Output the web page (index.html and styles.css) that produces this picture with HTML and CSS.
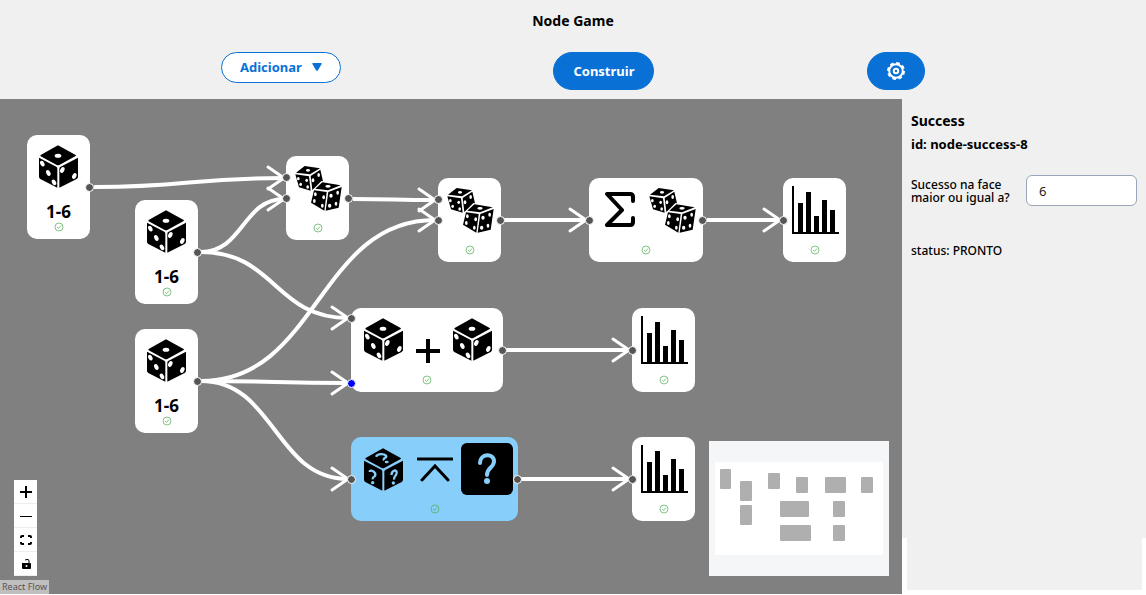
FILE: index.html
```html
<!DOCTYPE html>
<html lang="pt-BR">
<head>
<meta charset="utf-8">
<title>Node Game</title>
<link rel="stylesheet" href="styles.css">
</head>
<body>
<svg class="sprite" aria-hidden="true">
  <symbol id="die" viewBox="0 0 117 127">
    <path d="M57 0 110 29Q112 31 110 32L61 59Q57 61 53 59L5 33Q3 31 5 29Z"/>
    <path d="M0 37 52 64Q55 66 55 70V127L4 101Q0 98 0 94Z"/>
    <path d="M117 37 65 64Q61 66 61 70V127L113 101Q117 98 117 94Z"/>
    <g fill="#fff">
      <ellipse cx="57" cy="31" rx="10" ry="6"/>
      <ellipse cx="10" cy="55" rx="6" ry="9" transform="rotate(-28 10 55)"/>
      <ellipse cx="28" cy="83" rx="6" ry="9" transform="rotate(-28 28 83)"/>
      <ellipse cx="45" cy="111" rx="6" ry="9" transform="rotate(-28 45 111)"/>
      <ellipse cx="70" cy="74" rx="6" ry="9" transform="rotate(28 70 74)"/>
      <ellipse cx="106" cy="92" rx="6" ry="9" transform="rotate(28 106 92)"/>
    </g>
  </symbol>
  <symbol id="mystery" viewBox="0 0 117 127">
    <path d="M57 0 110 29Q112 31 110 32L61 59Q57 61 53 59L5 33Q3 31 5 29Z"/>
    <path d="M0 37 52 64Q55 66 55 70V127L4 101Q0 98 0 94Z"/>
    <path d="M117 37 65 64Q61 66 61 70V127L113 101Q117 98 117 94Z"/>
    <g fill="none" stroke="#87cefa" stroke-width="7">
      <path d="M36 25C41 15 60 16 66 22C71 29 55 28 60 36"/>
      <path d="M17 71C17 61 35 70 34 80C33 88 25 82 26 93"/>
      <path d="M82 80C84 65 99 62 98 74C97 84 89 83 90 94"/>
    </g>
    <g fill="#87cefa"><ellipse cx="68" cy="41" rx="6" ry="4"/><circle cx="26" cy="103" r="5"/><circle cx="88" cy="104" r="5"/></g>
  </symbol>
  <symbol id="dice" viewBox="15 15 141 138">
    <path d="M18 38 44 18 90 25 60 43Z"/>
    <path d="M16 43 57 49 62 92 27 82Z"/>
    <path d="M62 48 91 29 99 64 67 90Z"/>
    <g fill="#fff">
      <ellipse cx="54" cy="31" rx="6" ry="4"/>
      <ellipse cx="25" cy="56" rx="4" ry="5"/><ellipse cx="50" cy="61" rx="4" ry="5"/>
      <ellipse cx="32" cy="73" rx="4" ry="5"/><ellipse cx="53" cy="81" rx="4" ry="5"/>
      <ellipse cx="69" cy="61" rx="4" ry="6"/><ellipse cx="86" cy="45" rx="4" ry="6"/>
    </g>
    <path d="M70 88 94 63 158 73 159 82 148 148 104 157 59 130Z" fill="#fff"/>
    <path d="M76 86 97 67 152 76 114 91Z"/>
    <path d="M72 91 110 96 103 152 63 128Z"/>
    <path d="M115 96 155 81 146 143 107 152Z"/>
    <g fill="#fff">
      <ellipse cx="114" cy="79" rx="8" ry="4"/>
      <ellipse cx="76" cy="103" rx="4" ry="6"/>
      <ellipse cx="73" cy="123" rx="4" ry="6"/><ellipse cx="97" cy="137" rx="4" ry="6"/>
      <ellipse cx="101" cy="112" rx="4" ry="6"/>
      <ellipse cx="123" cy="107" rx="5" ry="6"/><ellipse cx="143" cy="98" rx="4" ry="6"/>
      <ellipse cx="119" cy="137" rx="5" ry="6"/><ellipse cx="138" cy="131" rx="4" ry="6"/>
    </g>
  </symbol>
  <symbol id="chart" viewBox="0 0 47 49">
    <path d="M0 0h2v46h45v2H0ZM6 17h5v29H6ZM14 6h5v40h-5ZM22 30h5v16h-5ZM30 14h5v32h-5ZM38 24h5v22h-5Z"/>
  </symbol>
  <symbol id="check" viewBox="0 0 10 10">
    <circle cx="5" cy="5" r="4" fill="none" stroke="#4caf50" stroke-width=".7"/>
    <path d="M3 5 4.500 6.500 7 3.500" fill="none" stroke="#4caf50" stroke-width=".7"/>
  </symbol>
</svg>

<header class="top">
  <h1 class="title">Node Game</h1>
  <div class="actions">
    <button class="btn btn-outline" type="button">Adicionar
      <svg class="caret" viewBox="0 0 10 8" aria-hidden="true"><path d="M1 0h8q1 0 .6 1L6 7.300q-1 1-2 0L.4 1Q0 0 1 0Z"/></svg></button>
    <button class="btn btn-solid" type="button">Construir</button>
    <button class="btn btn-solid" type="button" aria-label="Configurações">
      <svg class="gear" viewBox="0 0 18 18" aria-hidden="true"><circle cx="9" cy="9" r="6.800"/><circle class="teeth" cx="9" cy="9" r="8"/><circle cx="9" cy="9" r="2.200"/></svg></button>
  </div>
</header>

<div class="workspace">
  <main class="canvas">
    <svg class="edges" aria-hidden="true">
      <defs>
        <marker id="arrow" markerUnits="userSpaceOnUse" markerWidth="24" markerHeight="30" refX="20" refY="15" viewBox="0 0 24 30" orient="0">
          <path class="arrow" d="M4 4 20 15 4 26"/>
        </marker>
      </defs>
      <g class="edge">
        <path d="M94 88C189 88 189 79 284 79"/>
        <path d="M201 153C243 153 243 100 284 100"/>
        <path d="M201 153C275 153 275 219 348 219"/>
        <path d="M201 282C318 282 318 121 435 121"/>
        <path d="M201 282C275 282 275 284 348 284"/>
        <path d="M201 282C275 282 275 380 348 380"/>
        <path d="M353 100C394 100 394 101 435 101"/>
        <path d="M504 121H586"/>
        <path d="M707 121H780"/>
        <path d="M506 251H629"/>
        <path d="M521 380H629"/>
      </g>
    </svg>

    <article class="node die-node n1"><svg class="icon-die"><use href="#die"/></svg><span class="range">1-6</span><svg class="check"><use href="#check"/></svg><i class="port out"></i></article>
    <article class="node die-node n2"><svg class="icon-die"><use href="#die"/></svg><span class="range">1-6</span><svg class="check"><use href="#check"/></svg><i class="port out"></i></article>
    <article class="node die-node n3"><svg class="icon-die"><use href="#die"/></svg><span class="range">1-6</span><svg class="check"><use href="#check"/></svg><i class="port out"></i></article>

    <article class="node n4"><div class="icons"><svg class="icon-dice"><use href="#dice"/></svg></div><svg class="check"><use href="#check"/></svg><i class="port in in-a"></i><i class="port in"></i><i class="port out"></i></article>
    <article class="node n5"><div class="icons"><svg class="icon-dice"><use href="#dice"/></svg></div><svg class="check"><use href="#check"/></svg><i class="port in in-a"></i><i class="port in"></i><i class="port out"></i></article>
    <article class="node n6"><div class="icons icons-sum">
      <svg class="icon-sum" viewBox="0 0 31 36"><path d="M28 9V5q0-3-3-3H2L17 18 2 33H25q3 0 3-3V26"/></svg>
      <svg class="icon-dice"><use href="#dice"/></svg></div><svg class="check"><use href="#check"/></svg><i class="port in"></i><i class="port out"></i></article>
    <article class="node n7"><div class="icons"><svg class="icon-chart"><use href="#chart"/></svg></div><svg class="check"><use href="#check"/></svg><i class="port in"></i></article>

    <article class="node n8"><div class="icons icons-add"><svg class="icon-die"><use href="#die"/></svg>
      <svg class="icon-plus" viewBox="0 0 26 26"><path d="M13 1V25M1 13H25"/></svg>
      <svg class="icon-die"><use href="#die"/></svg></div><svg class="check"><use href="#check"/></svg><i class="port in in-top"></i><i class="port in in-bottom"></i><i class="port out"></i></article>
    <article class="node n9"><div class="icons"><svg class="icon-chart"><use href="#chart"/></svg></div><svg class="check"><use href="#check"/></svg><i class="port in"></i></article>

    <article class="node selected n10"><div class="icons icons-success"><svg class="icon-die"><use href="#mystery"/></svg>
      <svg class="icon-limit" viewBox="0 0 36 26"><path d="M1 3H35M5 24 18 10 31 24"/></svg>
      <svg class="icon-face" viewBox="0 0 52 52"><rect width="52" height="52" rx="6"/><path d="M19 20C19 10 33 10 33 18C33 25 26 24 26 32"/><circle cx="26" cy="38" r="3"/></svg></div><svg class="check"><use href="#check"/></svg><i class="port in"></i><i class="port out"></i></article>
    <article class="node n11"><div class="icons"><svg class="icon-chart"><use href="#chart"/></svg></div><svg class="check"><use href="#check"/></svg><i class="port in"></i></article>

    <div class="controls">
      <button type="button" aria-label="Zoom in"><svg viewBox="0 0 12 12"><path class="line bold" d="M6 0V12M0 6H12"/></svg></button>
      <button type="button" aria-label="Zoom out"><svg viewBox="0 0 12 12"><path class="line" d="M0 6.500H12"/></svg></button>
      <button type="button" aria-label="Fit view"><svg viewBox="0 0 12 12"><path class="line bold" d="M1 4V3Q1 2 2 2H4M8 2H10Q11 2 11 3V4M11 8V9Q11 10 10 10H8M4 10H2Q1 10 1 9V8"/></svg></button>
      <button type="button" aria-label="Toggle interactivity"><svg viewBox="0 0 12 12"><path d="M2 5H10Q11 5 11 6V10Q11 11 10 11H3Q2 11 2 10Z"/><path class="line" d="M9 5V3Q9 1 7 1.500L5 2"/><circle cx="6.500" cy="8" r="1" fill="#fff"/></svg></button>
    </div>

    <svg class="minimap" viewBox="0 0 180 135" aria-label="Mini map" role="img">
      <rect class="view" x="6" y="21" width="168" height="93"/>
      <rect x="11" y="28" width="11" height="20" rx="1"/><rect x="31" y="40" width="12" height="20" rx="1"/>
      <rect x="31" y="64" width="12" height="20" rx="1"/><rect x="59" y="32" width="12" height="16" rx="1"/>
      <rect x="87" y="36" width="12" height="16" rx="1"/><rect x="116" y="36" width="21" height="16" rx="1"/>
      <rect x="152" y="36" width="12" height="16" rx="1"/><rect x="71" y="60" width="29" height="16" rx="1"/>
      <rect x="124" y="60" width="12" height="16" rx="1"/><rect x="71" y="84" width="31" height="16" rx="1"/>
      <rect x="124" y="84" width="12" height="16" rx="1"/>
    </svg>
    <a class="attribution" href="#">React Flow</a>
  </main>

  <aside class="side">
    <div class="panel">
      <h2 class="node-name">Success</h2>
      <p class="node-id">id: node-success-8</p>
      <div class="field">
        <label for="face">Sucesso na face maior ou igual a?</label>
        <input id="face" type="text" value="6">
      </div>
      <p class="status">status: PRONTO</p>
    </div>
    <div class="panel-foot"></div>
  </aside>
</div>
</body>
</html>
```
FILE: styles.css
```css
* { box-sizing: border-box; }

body {
  margin: 0;
  min-height: 100vh;
  display: flex;
  flex-direction: column;
  font-family: "Noto Sans", "Open Sans", sans-serif;
  color: #000;
  background: #fff;
}

.sprite { position: absolute; width: 0; height: 0; }

h1, h2, p { margin: 0; }

.top { background: #f0f0f0; padding: 12px 0 9px; }
.title { font-size: 14px; line-height: 18px; text-align: center; }
.actions {
  display: flex;
  justify-content: space-between;
  align-items: flex-start;
  padding: 22px 221px 0;
}
.btn {
  border: 1px solid #0971d6;
  border-radius: 20px;
  font: 700 13px/18px "Noto Sans", "Open Sans", sans-serif;
  display: flex;
  align-items: center;
  justify-content: center;
  cursor: pointer;
}
.btn-outline { height: 31px; padding: 0 18px 1px; gap: 10px; background: #fff; color: #0971d6; }
.btn-solid { height: 38px; padding: 0 19px 1px; background: #0971d6; color: #fff; }
.caret { width: 10px; height: 8px; fill: currentColor; }
.gear { width: 18px; height: 18px; fill: none; stroke: #fff; stroke-width: 2; }
.gear .teeth { stroke-dasharray: 3.600 2.683; }

.workspace { flex: 1; display: grid; grid-template-columns: minmax(0, 1fr) 244px; }

.canvas { position: relative; overflow: hidden; background: #808080; margin-bottom: 1px; }
.edges { position: absolute; inset: 0; width: 100%; height: 100%; }
.edge path { fill: none; stroke: #fff; stroke-width: 4; marker-end: url(#arrow); }
.arrow { fill: none; stroke: #fff; stroke-width: 3; stroke-linecap: round; stroke-linejoin: round; }

.node {
  position: absolute;
  width: 63px;
  height: 84px;
  padding: 6px 0 7px;
  display: flex;
  flex-direction: column;
  align-items: center;
  justify-content: space-between;
  border-radius: 10px;
  background: #fff;
}
.die-node { height: 104px; padding-top: 10px; }
.selected { background: #87cefa; }

.n1 { left: 27px; top: 36px; }
.n2 { left: 135px; top: 101px; }
.n3 { left: 135px; top: 230px; }
.n4 { left: 286px; top: 57px; }
.n5 { left: 438px; top: 79px; }
.n6 { left: 589px; top: 79px; width: 114px; }
.n7 { left: 783px; top: 79px; }
.n8 { left: 351px; top: 209px; width: 152px; }
.n9 { left: 632px; top: 209px; }
.n10 { left: 351px; top: 338px; width: 167px; }
.n11 { left: 632px; top: 338px; }

.icons { display: flex; align-items: center; justify-content: center; height: 52px; padding-left: 2px; }
.icons-sum { gap: 13px; padding-left: 9px; }
.icons-add { gap: 12px; align-items: flex-start; padding-top: 4px; }
.icons-success { gap: 14px; padding-left: 8px; }
.icons-success .icon-face { margin-left: -6px; }
.icon-die { width: 39px; height: 43px; }
.icon-dice { width: 47px; height: 46px; }
.icon-chart { width: 47px; height: 49px; }
.icon-sum { width: 31px; height: 36px; fill: none; stroke: #000; stroke-width: 4; stroke-linecap: round; stroke-linejoin: round; }
.icon-plus { width: 26px; height: 26px; margin-top: 20px; stroke: #000; stroke-width: 4; }
.icon-limit { width: 36px; height: 26px; fill: none; stroke: #000; stroke-width: 3; stroke-linecap: round; }
.icon-face { width: 52px; height: 52px; }
.icon-face path { fill: none; stroke: #87cefa; stroke-width: 4; stroke-linecap: round; }
.icon-face circle { fill: #87cefa; }
.range { font-weight: 700; font-size: 17px; line-height: 18px; margin-top: 14px; }
.check { width: 10px; height: 10px; }

.port {
  position: absolute;
  top: 50%;
  width: 9px;
  height: 9px;
  margin-top: -4px;
  border: 1px solid #fff;
  border-radius: 50%;
  background: #555;
}
.in { left: -4px; }
.out { right: -4px; }
.in-a { top: 25%; }
.in-top { top: 12%; }
.in-bottom { top: 89%; background: #00f; }

.controls { position: absolute; left: 14px; bottom: 18px; display: flex; flex-direction: column; }
.controls button {
  width: 23px;
  height: 24px;
  padding: 0;
  display: flex;
  align-items: center;
  justify-content: center;
  border: 0;
  border-bottom: 1px solid #eee;
  background: #fefefe;
}
.controls svg { width: 12px; height: 12px; }
.line { fill: none; stroke: #000; stroke-width: 1; }
.bold { stroke-width: 2; }

.minimap { position: absolute; right: 13px; bottom: 18px; width: 180px; height: 135px; background: #f5f6f8; fill: #afafaf; }
.minimap .view { fill: #fff; }

.attribution {
  position: absolute;
  left: 0;
  bottom: 0;
  padding: 0 2px;
  font-size: 9px;
  line-height: 14px;
  color: #555;
  background: #bfbfbf;
  text-decoration: none;
}

.side { display: flex; flex-direction: column; background: #fff; }
.panel { flex: 1; padding: 12px 9px; background: #f0f0f0; }
.panel-foot { height: 52px; margin: 0 4px 5px 5px; background: #f0f0f0; }
.node-name { font-size: 14px; line-height: 20px; }
.node-id { margin-top: 4px; font-size: 13px; font-weight: 700; line-height: 18px; }
.field { margin-top: 22px; display: grid; grid-template-columns: minmax(0, 1fr) 111px; column-gap: 10px; align-items: center; }
.field label { font-size: 12px; font-weight: 500; line-height: 13px; }
.field input {
  width: 100%;
  height: 31px;
  padding: 0 12px;
  border: 1px solid #99a5b8;
  border-radius: 6px;
  background: #fff;
  font: 13px "Noto Sans", sans-serif;
  color: #222;
}
.status { margin-top: 36px; font-size: 12px; font-weight: 500; line-height: 18px; }
```
